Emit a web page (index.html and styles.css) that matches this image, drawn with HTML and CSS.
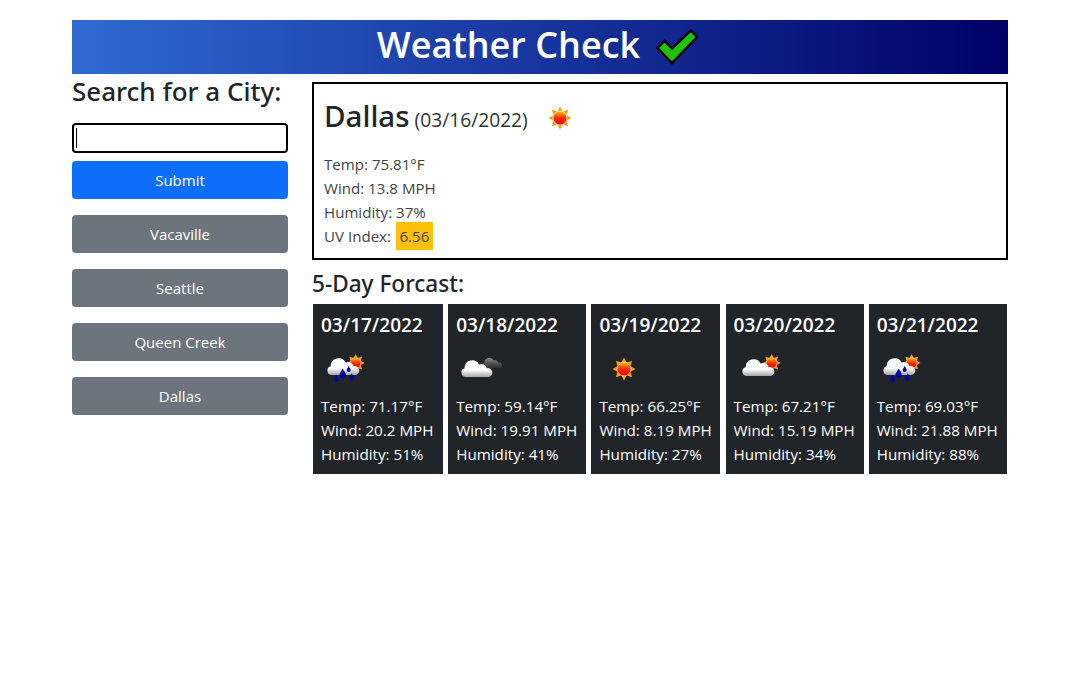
FILE: index.html
```html
<!DOCTYPE html>
<html lang="en">
<head>
  <meta charset="UTF-8" />
  <title>Weather Check</title>
  <meta name="viewport" content="width=device-width, initial-scale=1.0" />
  <link rel="stylesheet" href="styles.css">
</head>
<body>

  <!-- Shared weather icons -->
  <svg class="sprite" xmlns="http://www.w3.org/2000/svg">
    <defs>
      <linearGradient id="sunFill" x1="0" y1="0" x2="0" y2="1">
        <stop offset="0" stop-color="#ffc400" />
        <stop offset="0.5" stop-color="#ff2a00" />
        <stop offset="1" stop-color="#f00000" />
      </linearGradient>
      <linearGradient id="cloudFill" x1="0" y1="0" x2="0" y2="1">
        <stop offset="0" stop-color="#ffffff" />
        <stop offset="0.6" stop-color="#fbfbfb" />
        <stop offset="1" stop-color="#a4a4a4" />
      </linearGradient>
      <linearGradient id="darkFill" x1="0" y1="0" x2="0" y2="1">
        <stop offset="0" stop-color="#8c8c8c" />
        <stop offset="0.5" stop-color="#555555" />
        <stop offset="1" stop-color="#2c2c2c" />
      </linearGradient>
      <path id="cloudShape" d="M5 18A4.5 4.5 0 0 1 3.6 9.2A8 8 0 0 1 18.6 5.4A6 6 0 0 1 26.6 9.2A4.5 4.5 0 0 1 29 18Z" />
      <path id="dropShape" d="M0-4.8C.8-2.4 3-1 3 1.2A3 3 0 0 1-3 1.2C-3-1-.8-2.4 0-4.8Z" fill="#0000a8" />
      <g id="sunShape">
        <g fill="#ff9a0a">
          <path d="M0-11.5L2.4-7H-2.4Z" />
          <path d="M0-11.5L2.4-7H-2.4Z" transform="rotate(45)" />
          <path d="M0-11.5L2.4-7H-2.4Z" transform="rotate(90)" />
          <path d="M0-11.5L2.4-7H-2.4Z" transform="rotate(135)" />
          <path d="M0-11.5L2.4-7H-2.4Z" transform="rotate(180)" />
          <path d="M0-11.5L2.4-7H-2.4Z" transform="rotate(225)" />
          <path d="M0-11.5L2.4-7H-2.4Z" transform="rotate(270)" />
          <path d="M0-11.5L2.4-7H-2.4Z" transform="rotate(315)" />
        </g>
        <circle r="7" fill="url(#sunFill)" stroke="#ffe9c4" stroke-width="0.8" />
      </g>
    </defs>
    <symbol id="icon-sun" viewBox="0 0 50 50">
      <use href="#sunShape" x="25" y="25" />
    </symbol>
    <symbol id="icon-cloud-sun" viewBox="0 0 50 50">
      <use href="#sunShape" transform="translate(37.7 19) scale(0.78)" />
      <use href="#cloudShape" x="8" y="14" fill="url(#cloudFill)" />
    </symbol>
    <symbol id="icon-cloud-night" viewBox="0 0 50 50">
      <use href="#cloudShape" transform="translate(26 13) scale(0.62)" fill="url(#darkFill)" />
      <use href="#cloudShape" transform="translate(5 15) scale(0.97 1)" fill="url(#cloudFill)" />
    </symbol>
    <symbol id="icon-rain-sun" viewBox="0 0 50 50">
      <use href="#sunShape" transform="translate(34.7 19) scale(0.78)" />
      <use href="#cloudShape" transform="translate(6 13)" fill="url(#cloudFill)" />
      <use href="#dropShape" transform="translate(15.3 34.6) scale(0.8)" />
      <use href="#dropShape" transform="translate(21.7 29.6) scale(1.05)" />
      <use href="#dropShape" transform="translate(27.7 25.2) scale(0.65)" />
      <use href="#dropShape" transform="translate(30.7 33.2) scale(0.8)" />
    </symbol>
  </svg>

  <div class="container">

    <header class="page-header">
      <h1>Weather Check</h1>
      <svg class="check" viewBox="0 0 42 36" xmlns="http://www.w3.org/2000/svg">
        <path d="M1.5 19L8.5 12L16 19.5L35 1.5L41 8L16 34Z" fill="#1cc40c" stroke="#000" stroke-width="2.4" stroke-linejoin="miter" />
      </svg>
    </header>

    <div class="columns">

      <!-- Search -->
      <aside class="search">
        <h3>Search for a City:</h3>
        <div class="field">
          <input type="text" class="city-input" />
          <span class="caret"></span>
        </div>
        <button class="btn btn-primary">Submit</button>
        <div class="history">
          <button class="btn btn-secondary">Vacaville</button>
          <button class="btn btn-secondary">Seattle</button>
          <button class="btn btn-secondary">Queen Creek</button>
          <button class="btn btn-secondary">Dallas</button>
        </div>
      </aside>

      <main class="results">

        <!-- Current weather -->
        <section class="current">
          <div class="current-title">
            <h2>Dallas</h2>
            <span class="current-date">(03/16/2022)</span>
            <svg class="icon"><use href="#icon-sun" /></svg>
          </div>
          <p>Temp: 75.81°F</p>
          <p>Wind: 13.8 MPH</p>
          <p>Humidity: 37%</p>
          <p>UV Index: <span class="uv">6.56</span></p>
        </section>

        <h4>5-Day Forcast:</h4>

        <!-- Forecast cards -->
        <section class="forecast">
          <article class="card">
            <h5>03/17/2022</h5>
            <svg class="icon"><use href="#icon-rain-sun" /></svg>
            <p>Temp: 71.17°F</p>
            <p>Wind: 20.2 MPH</p>
            <p>Humidity: 51%</p>
          </article>
          <article class="card">
            <h5>03/18/2022</h5>
            <svg class="icon"><use href="#icon-cloud-night" /></svg>
            <p>Temp: 59.14°F</p>
            <p>Wind: 19.91 MPH</p>
            <p>Humidity: 41%</p>
          </article>
          <article class="card">
            <h5>03/19/2022</h5>
            <svg class="icon"><use href="#icon-sun" /></svg>
            <p>Temp: 66.25°F</p>
            <p>Wind: 8.19 MPH</p>
            <p>Humidity: 27%</p>
          </article>
          <article class="card">
            <h5>03/20/2022</h5>
            <svg class="icon"><use href="#icon-cloud-sun" /></svg>
            <p>Temp: 67.21°F</p>
            <p>Wind: 15.19 MPH</p>
            <p>Humidity: 34%</p>
          </article>
          <article class="card">
            <h5>03/21/2022</h5>
            <svg class="icon"><use href="#icon-rain-sun" /></svg>
            <p>Temp: 69.03°F</p>
            <p>Wind: 21.88 MPH</p>
            <p>Humidity: 88%</p>
          </article>
        </section>

      </main>
    </div>
  </div>

</body>
</html>
```

FILE: styles.css
```css
* {
  margin: 0;
  padding: 0;
  box-sizing: border-box;
}

body {
  font-family: "Open Sans", "Noto Sans", sans-serif;
  font-size: 16px;
  line-height: 24px;
  color: #212529;
  background: #fff;
}

.sprite {
  display: block;
  width: 0;
  height: 0;
  overflow: hidden;
}

.container {
  width: 936px;
  margin: 20px auto 0;
}

.page-header {
  display: flex;
  justify-content: center;
  align-items: center;
  gap: 16px;
  height: 54px;
  padding: 0 5px 0 0;
  color: white;
  background: linear-gradient(to right, #2f6ad2, #000068);
}

.page-header h1 {
  font-size: 36px;
  line-height: 50px;
  font-weight: 600;
  margin-top: -4px;
}

.check {
  width: 42px;
  height: 36px;
}

.columns {
  display: flex;
  gap: 24px;
  margin-top: 8px;
}

/* left column */
.search {
  display: flex;
  flex-direction: column;
  width: 216px;
}

.search h3 {
  font-family: "Noto Sans", sans-serif;
  font-size: 26px;
  line-height: 18px;
  font-weight: 500;
  padding-bottom: 23px;
}

.field {
  position: relative;
  height: 30px;
  margin-bottom: 8px;
}

.city-input {
  display: block;
  width: 100%;
  height: 30px;
  border: 2px solid black;
  border-radius: 4px;
  outline: none;
}

.caret {
  position: absolute;
  left: 4px;
  top: 5px;
  width: 1px;
  height: 20px;
  background: black;
}

.btn {
  display: block;
  width: 100%;
  height: 38px;
  border: none;
  border-radius: 4px;
  color: white;
  font-family: inherit;
  font-size: 15px;
}

.btn-primary {
  background: #0d6efd;
}

.btn-secondary {
  background: #6c757d;
}

.history {
  display: flex;
  flex-direction: column;
  gap: 16px;
  margin-top: 16px;
}

/* right column */
.results {
  flex: 1;
}

.current {
  height: 178px;
  padding: 10px 10px;
  border: 2px solid black;
  font-size: 15.1px;
  color: #444;
}

.current-title {
  display: flex;
  align-items: center;
  height: 45px;
  margin-bottom: 13px;
}

.current-title h2 {
  font-family: "Noto Sans", sans-serif;
  font-size: 29.5px;
  font-weight: 500;
  color: #212529;
  margin-top: -2px;
}

.current-date {
  font-size: 19.2px;
  color: #333;
  margin: 6px 0 0 5px;
}

.current-title .icon {
  margin: 2px 0 0 7px;
}

.uv {
  margin-left: 1px;
  padding: 4px 3.5px;
  background: #ffc107;
}

.results h4 {
  font-family: "Noto Sans", sans-serif;
  font-size: 22.6px;
  font-weight: 500;
  line-height: 29px;
  margin: 9px 0 6px;
}

.forecast {
  display: grid;
  grid-template-columns: 130px 138px 129px 138px 138px;
  gap: 5.2px;
  padding: 0 1px;
}

.card {
  height: 170px;
  padding: 8px;
  color: white;
  background: #212529;
  font-size: 15.2px;
}

.card h5 {
  font-size: 19px;
  font-weight: 600;
  line-height: 26px;
  margin-bottom: 6px;
}

.icon {
  display: block;
  width: 50px;
  height: 50px;
}
```
